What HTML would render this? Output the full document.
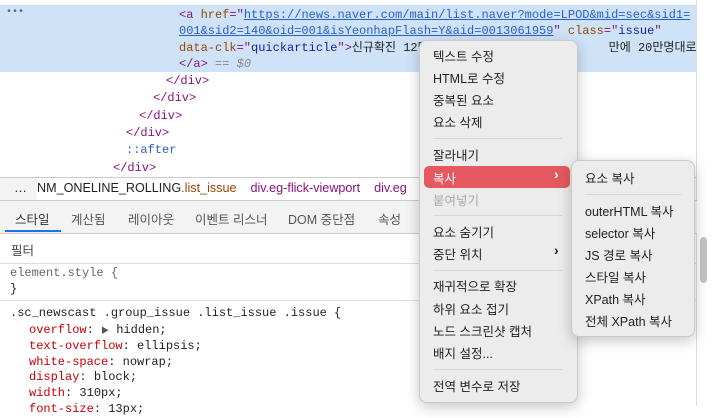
<!DOCTYPE html>
<html><head><meta charset="utf-8"><style>
*{margin:0;padding:0;box-sizing:border-box}
body{width:716px;height:406px;overflow:hidden;background:#fff;position:relative;font-family:"Liberation Sans","Noto Sans CJK KR",sans-serif;font-size:12px;color:#222}
.m{font-family:"Liberation Mono","Noto Sans CJK KR",monospace;font-size:12px;position:absolute;white-space:pre;line-height:17px}
.t{color:#881280}.at{color:#994500}.v{color:#1a1aa6}.u{text-decoration:underline;color:#2a5ec9}
.ab{position:absolute}
.menu{position:absolute;background:#ececec;border:1px solid #c9c9c9;border-radius:8px;box-shadow:0 4px 14px rgba(0,0,0,.22)}
.it{position:absolute;font-size:12.5px;color:#222;white-space:nowrap}
.sep{position:absolute;height:1px;background:#d6d6d6}
.r{color:#c80000}
</style></head><body>
<div class="ab" style="left:0;top:5px;width:697px;height:67px;background:#cfe3f8"></div>
<div class="m" style="left:6px;top:4px;color:#666;font-size:10px">•••</div>
<div class="m" style="left:179px;top:7px"><span class="t">&lt;a </span><span class="at">href</span><span class="t">="</span><span class="u">https://news.naver.com/main/list.naver?mode=LPOD&amp;mid=sec&amp;sid1=</span></div>
<div class="m" style="left:179px;top:23px"><span class="u">001&amp;sid2=140&amp;oid=001&amp;isYeonhapFlash=Y&amp;aid=0013061959</span><span class="t">" </span><span class="at">class</span><span class="t">="</span><span class="v">issue</span><span class="t">"</span></div>
<div class="m" style="left:179px;top:40px"><span class="at">data-clk</span><span class="t">="</span><span class="v">quickarticle</span><span class="t">"&gt;</span>신규확진 12만                         만에 20만명대로</div>
<div class="m" style="left:179px;top:56px"><span class="t">&lt;/a&gt;</span> <span style="color:#888">== <i>$0</i></span></div>
<div class="m t" style="left:166px;top:73px">&lt;/div&gt;</div>
<div class="m t" style="left:153px;top:90px">&lt;/div&gt;</div>
<div class="m t" style="left:139px;top:108px">&lt;/div&gt;</div>
<div class="m t" style="left:126px;top:125px">&lt;/div&gt;</div>
<div class="m" style="left:126px;top:142px;color:#2a5ec9">::after</div>
<div class="m t" style="left:113px;top:160px">&lt;/div&gt;</div>
<div class="ab" style="left:696px;top:0;width:1px;height:406px;background:#ddd"></div>
<div class="ab" style="left:0;top:177px;width:697px;height:1px;background:#ccc"></div>
<div class="ab" style="left:0;top:178px;width:37px;height:22px;background:#f3f3f3"></div>
<div class="ab" style="left:14px;top:180px;font-size:13px">…</div>
<div class="ab" style="left:37px;top:181px;font-size:12.6px;white-space:nowrap"><span style="color:#222">NM_ONELINE_ROLLING</span><span style="color:#994500">.list_issue</span>&nbsp;&nbsp;&nbsp;&nbsp;<span style="color:#881280">div.eg-flick-viewport</span>&nbsp;&nbsp;&nbsp;&nbsp;<span style="color:#881280">div.eg</span></div>
<div class="ab" style="left:0;top:200px;width:697px;height:1px;background:#ccc"></div>
<div class="ab" style="left:0;top:201px;width:697px;height:32px;background:#f3f3f3"></div>
<div class="ab" style="left:15px;top:209px;font-size:12.5px;white-space:nowrap;color:#333">스타일</div>
<div class="ab" style="left:71px;top:209px;font-size:12.5px;color:#555">계산됨</div>
<div class="ab" style="left:128px;top:209px;font-size:12.5px;color:#555">레이아웃</div>
<div class="ab" style="left:195px;top:209px;font-size:12.5px;color:#555">이벤트 리스너</div>
<div class="ab" style="left:288px;top:209px;font-size:12.5px;color:#555">DOM 중단점</div>
<div class="ab" style="left:378px;top:209px;font-size:12.5px;color:#555">속성</div>
<div class="ab" style="left:5px;top:230px;width:56px;height:2px;background:#1a73e8"></div>
<div class="ab" style="left:0;top:233px;width:697px;height:1px;background:#ccc"></div>
<div class="ab" style="left:11px;top:240px;font-size:12.5px;color:#444">필터</div>
<div class="ab" style="left:0;top:263px;width:697px;height:1px;background:#ddd"></div>
<div class="m" style="left:10px;top:265px;color:#666">element.style {</div>
<div class="m" style="left:10px;top:281px">}</div>
<div class="ab" style="left:0;top:300px;width:697px;height:1px;background:#ddd"></div>
<div class="m" style="left:10px;top:305px">.sc_newscast .group_issue .list_issue .issue {</div>
<div class="m" style="left:29px;top:322px"><span class="r">overflow</span>: <span style="font-size:8px;color:#555">▶</span> hidden;</div>
<div class="m" style="left:29px;top:338px"><span class="r">text-overflow</span>: ellipsis;</div>
<div class="m" style="left:29px;top:354px"><span class="r">white-space</span>: nowrap;</div>
<div class="m" style="left:29px;top:369px"><span class="r">display</span>: block;</div>
<div class="m" style="left:29px;top:385px"><span class="r">width</span>: 310px;</div>
<div class="m" style="left:29px;top:401px"><span class="r">font-size</span>: 13px;</div>
<div class="ab" style="left:700px;top:237px;width:7px;height:46px;background:#c4c4c4;border-radius:4px"></div>

<div class="menu" style="left:419px;top:40px;width:159px;height:363px">
<div class="it" style="left:13px;top:5px">텍스트 수정</div>
<div class="it" style="left:13px;top:27px">HTML로 수정</div>
<div class="it" style="left:13px;top:49px">중복된 요소</div>
<div class="it" style="left:13px;top:71px">요소 삭제</div>
<div class="sep" style="left:13px;top:97px;width:129px"></div>
<div class="it" style="left:13px;top:104px">잘라내기</div>
<div class="ab" style="left:4px;top:125px;width:146px;height:22px;background:#e5585f;border-radius:5px"></div>
<div class="it" style="left:13px;top:127px;color:#fff">복사</div>
<div class="it" style="left:134px;top:125px;color:#fff;font-size:14px;font-weight:bold">›</div>
<div class="it" style="left:13px;top:149px;color:#aaa">붙여넣기</div>
<div class="sep" style="left:13px;top:174px;width:129px"></div>
<div class="it" style="left:13px;top:181px">요소 숨기기</div>
<div class="it" style="left:13px;top:203px">중단 위치</div>
<div class="it" style="left:134px;top:201px;font-size:14px;font-weight:bold">›</div>
<div class="sep" style="left:13px;top:229px;width:129px"></div>
<div class="it" style="left:13px;top:235px">재귀적으로 확장</div>
<div class="it" style="left:13px;top:258px">하위 요소 접기</div>
<div class="it" style="left:13px;top:280px">노드 스크린샷 캡처</div>
<div class="it" style="left:13px;top:302px">배지 설정...</div>
<div class="sep" style="left:13px;top:328px;width:129px"></div>
<div class="it" style="left:13px;top:335px">전역 변수로 저장</div>
</div>

<div class="menu" style="left:571px;top:160px;width:124px;height:177px">
<div class="it" style="left:13px;top:7px">요소 복사</div>
<div class="sep" style="left:13px;top:33px;width:96px"></div>
<div class="it" style="left:13px;top:40px">outerHTML 복사</div>
<div class="it" style="left:13px;top:62px">selector 복사</div>
<div class="it" style="left:13px;top:84px">JS 경로 복사</div>
<div class="it" style="left:13px;top:106px">스타일 복사</div>
<div class="it" style="left:13px;top:128px">XPath 복사</div>
<div class="it" style="left:13px;top:150px">전체 XPath 복사</div>
</div>
</body></html>
